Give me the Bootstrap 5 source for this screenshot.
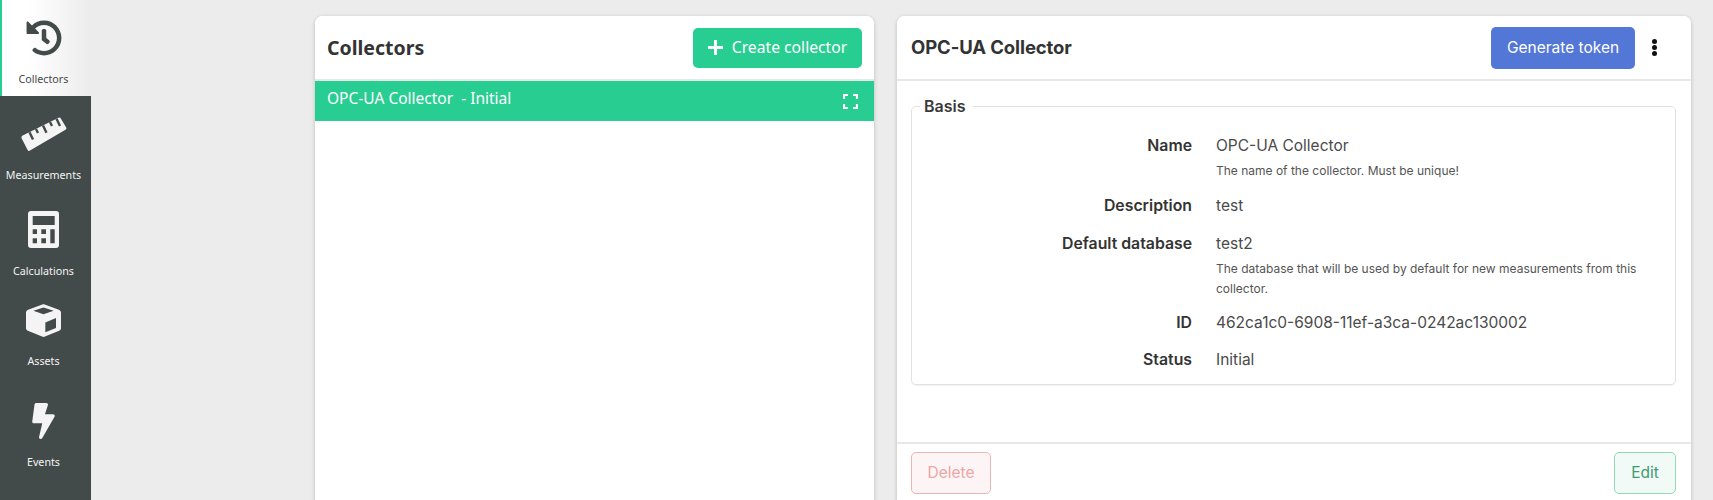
<!doctype html>
<html lang="en"><head><meta charset="utf-8">
<link href="https://cdn.jsdelivr.net/npm/bootstrap@5.3.0/dist/css/bootstrap.min.css" rel="stylesheet">
<style>
html,body{height:500px;overflow:hidden}
body{background:#ececec;font-family:"Inter",sans-serif;color:#3a3a3a}
.shell{height:500px}
.rail{width:91px;background:#434a4a;flex:none;font-family:"Noto Sans",sans-serif}
.rail-item{display:flex;flex-direction:column;align-items:center;color:#f4f4f4;font-size:10.7px;text-decoration:none;line-height:14px;padding-right:4px}
.rail-item.on{background:linear-gradient(90deg,#fff 30%,#ececec);color:#434a4a;border-left:2px solid #28cd92;padding-right:6px}
.rail-item svg{fill:currentColor;display:block}
.ri1{height:96px;padding-top:20px}.ri1 svg{margin-bottom:16px}
.ri2{height:96px;padding-top:21px}.ri2 svg{margin-bottom:16px}
.ri3{height:88px;padding-top:19px}.ri3 svg{margin-bottom:16px}
.ri4{height:92px;padding-top:24px}.ri4 svg{margin-bottom:17px}
.ri5{height:128px;padding-top:31px}.ri5 svg{margin-bottom:16px}
.slot{fill:none;stroke:#434a4a;stroke-width:2.400}
.stage{padding:16px 22px 0 224px;gap:23px}
.panel{border:0;border-radius:8px 8px 0 0;box-shadow:0 1px 4px rgba(0,0,0,.2);height:520px;background:#fff}
.panel-l{width:559px;font-family:"Noto Sans",sans-serif}
.panel-r{width:794px;flex:none}
.panel-head{height:65px;border-bottom:2px solid #e8e8e8;padding:0 12px;background:#fff;border-radius:8px 8px 0 0}
.panel-r .panel-head{padding:0 34px 0 14px}
.panel-title{font-family:"Noto Sans",sans-serif;font-weight:700;font-size:19.500px;color:#333;margin:0}
.panel-r .panel-title{font-family:"Inter",sans-serif;font-size:18.500px;letter-spacing:-.1px}
.btn-make{background:#28cd92;border:0;color:#fff;width:169px;height:40px;font-size:15.700px;border-radius:5px;padding:0;display:flex;align-items:center;justify-content:center;gap:9px}
.card>.list-group.sel-list:last-child{border-radius:0}
.row-sel{height:40px;background:#28cd92;color:#fff;border:0;padding:0 16px 0 12px;font-size:15.500px;line-height:34px}
.btn-token{background:#5277d6;border:0;color:#fff;width:144px;height:42px;font-size:15.500px;border-radius:5px;padding:0}
.dots{width:5px;margin-left:17px}
.dots i{display:block;width:5px;height:5px;border-radius:50%;background:#111;margin-bottom:1px}
.panel-body{padding:15px 15px 0 14px;height:361px}
.fs{border:1px solid #e2e2e2;border-radius:5px;height:289px;padding:0 12px;margin:0;box-shadow:0 1px 1px rgba(0,0,0,.06)}
.fs legend{float:none;width:auto;font-size:16px;font-weight:600;padding:0 7px 0 4px;margin:-11px 0 0 -4px;line-height:20px;height:20px;color:#3a3a3a}
.fact{display:flex;gap:24px;font-size:15.500px;line-height:20px}
.fact-k{width:268px;text-align:right;font-weight:600;flex:none;color:#333;font-size:15.800px}
.fact-v{color:#4a4a4a;flex:1}
.fact-h{font-size:12px;line-height:20px;color:#555;margin-top:5px;padding-right:10px}
.f1{margin-top:20px}.f2{margin-top:15px}.f3{margin-top:18px}.f4{margin-top:14px}.f5{margin-top:17px}
.panel-foot{border-top:2px solid #e8e8e8;padding:8px 15px 0 14px;background:#fff}
.btn-del{width:80px;height:42px;background:#fdf5f5;border:1px solid #eeb4b4;color:#eba6a6;font-size:15.500px;border-radius:5px;padding:0}
.btn-edit{width:62px;height:42px;background:#f1faf6;border:1px solid #8fdcb5;color:#3f9a72;font-size:15.500px;border-radius:5px;padding:0}
</style></head>
<body>
<div class="d-flex shell">
<nav class="rail d-flex flex-column">
<a class="rail-item ri1 on" href="#"><svg width="36" height="36" viewBox="0 0 512 512"><path d="M504 255.500c.3 136.600-111.200 248.400-247.800 248.500-59 0-113.200-20.500-155.800-54.900-11.100-8.900-11.900-25.500-1.900-35.600l11.300-11.300c8.600-8.600 22.400-9.500 31.900-2C173.100 425.100 212.800 440 256 440c101.700 0 184-82.300 184-184 0-101.700-82.300-184-184-184-48.800 0-93.100 19-126.100 49.900l50.800 50.800c10.100 10.100 2.900 27.300-11.300 27.300H24c-8.800 0-16-7.200-16-16V38.600c0-14.300 17.200-21.400 27.300-11.300l49.400 49.400C129.200 34.100 189.600 8 256 8c136.800 0 247.700 110.800 248 247.500zm-180.900 78.800l9.800-12.600c8.100-10.500 6.300-25.500-4.200-33.700L288 256.300V152c0-13.300-10.700-24-24-24h-16c-13.300 0-24 10.700-24 24v135.700l65.400 50.800c10.500 8.100 25.500 6.300 33.700-4.200z"/></svg>Collectors</a>
<a class="rail-item ri2" href="#"><svg width="46" height="35" viewBox="0 0 46 35"><path d="M1.200 18.800 L37.500 .8 Q39 .2 39.800 1.600 L45.200 10.500 Q46 12 44.500 12.800 L9 33.600 Q7.500 34.500 6.600 33 L.6 21.200 Q0 19.500 1.200 18.800Z"/><path class="slot" d="M8.500 15.200 L12 22.500 M15 12 L17 16 M22 8.500 L25.500 15.800 M29 5 L31 9 M35.500 1.800 L39 9"/></svg>Measurements</a>
<a class="rail-item ri3" href="#"><svg width="31" height="37" viewBox="0 0 31 37"><path fill-rule="evenodd" d="M3 0H28Q31 0 31 3V34Q31 37 28 37H3Q0 37 0 34V3Q0 0 3 0Z M4.700 5V14H26.700V5Z M4.700 18.300V23H9V18.300Z M13.300 18.300V23H18V18.300Z M22.300 18.300V32.300H26.700V18.300Z M4.700 27.300V32.300H9V27.300Z M13.300 27.300V32.300H18V27.300Z"/></svg>Calculations</a>
<a class="rail-item ri4" href="#"><svg width="35" height="33" viewBox="0 0 512 483"><path fill-rule="evenodd" d="M239 6L31 84C12 91 0 109 0 129V355C0 373 10 384 27 392L235 477C248 483 264 483 277 477L485 392C502 384 512 373 512 355V129C512 109 500 91 481 84L273 6C262 2 250 2 239 6ZM256 50L405 100L256 150L107 100Z M283 412V270L439 206V350Z"/></svg>Assets</a>
<a class="rail-item ri5" href="#"><svg width="23" height="36" viewBox="0 0 320 512"><path d="M296 160H180.600l42.600-129.800C227.200 15 215.700 0 200 0H56C44 0 33.800 8.900 32.200 20.800l-32 240C-2.700 275.200 8.500 288 24 288h118.700L96.600 482.500c-3.600 15.200 8 29.500 23.300 29.500 8.400 0 16.400-4.400 20.800-12l176-304c9.300-15.900-2.200-36-20.700-36z"/></svg>Events</a>
</nav>
<main class="stage d-flex flex-grow-1">
<section class="card panel panel-l">
<div class="panel-head d-flex align-items-center justify-content-between">
<h5 class="panel-title">Collectors</h5>
<button class="btn btn-make" type="button"><svg width="15" height="15" viewBox="0 0 15 15"><path d="M6 0h3v6h6v3H9v6H6V9H0V6h6z" fill="#fff"/></svg>Create collector</button>
</div>
<div class="list-group list-group-flush sel-list">
<div class="list-group-item row-sel d-flex justify-content-between align-items-start">
<span>OPC-UA Collector &nbsp;- Initial</span>
<svg class="align-self-center" width="15" height="15" viewBox="0 0 15 15" fill="none" stroke="#fff" stroke-width="2.200"><path d="M1 5V1H5M10 1H14V5M14 10V14H10M5 14H1V10"/></svg>
</div>
</div>
</section>
<section class="card panel panel-r">
<div class="panel-head d-flex align-items-center">
<h5 class="panel-title flex-grow-1">OPC-UA Collector</h5>
<button class="btn btn-token" type="button">Generate token</button>
<div class="dots"><i></i><i></i><i></i></div>
</div>
<div class="panel-body">
<fieldset class="fs">
<legend>Basis</legend>
<div class="fact f1"><div class="fact-k">Name</div><div class="fact-v">OPC-UA Collector<div class="fact-h">The name of the collector. Must be unique!</div></div></div>
<div class="fact f2"><div class="fact-k">Description</div><div class="fact-v">test</div></div>
<div class="fact f3"><div class="fact-k">Default database</div><div class="fact-v">test2<div class="fact-h">The database that will be used by default for new measurements from this collector.</div></div></div>
<div class="fact f4"><div class="fact-k">ID</div><div class="fact-v">462ca1c0-6908-11ef-a3ca-0242ac130002</div></div>
<div class="fact f5"><div class="fact-k">Status</div><div class="fact-v">Initial</div></div>
</fieldset>
</div>
<div class="panel-foot d-flex justify-content-between">
<button class="btn btn-del" type="button">Delete</button>
<button class="btn btn-edit" type="button">Edit</button>
</div>
</section>
</main>
</div>
<script src="https://cdn.jsdelivr.net/npm/bootstrap@5.3.0/dist/js/bootstrap.bundle.min.js"></script>
</body></html>
